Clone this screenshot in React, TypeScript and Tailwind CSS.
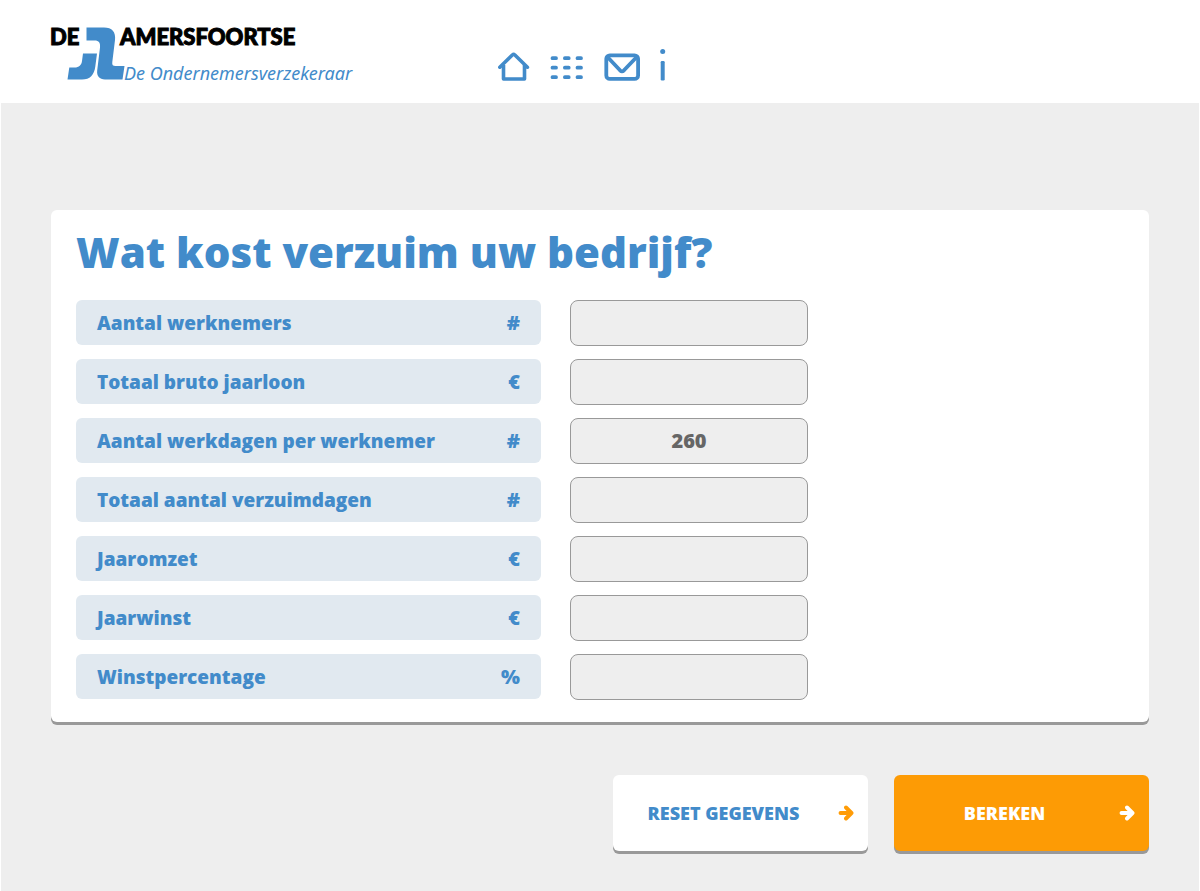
import { useState } from "react";
import type { ReactNode } from "react";

type Field = { id: string; label: string; unit: string; initial: string };

const fields: Field[] = [
  { id: "werknemers", label: "Aantal werknemers", unit: "#", initial: "" },
  { id: "jaarloon", label: "Totaal bruto jaarloon", unit: "€", initial: "" },
  { id: "werkdagen", label: "Aantal werkdagen per werknemer", unit: "#", initial: "260" },
  { id: "verzuimdagen", label: "Totaal aantal verzuimdagen", unit: "#", initial: "" },
  { id: "jaaromzet", label: "Jaaromzet", unit: "€", initial: "" },
  { id: "jaarwinst", label: "Jaarwinst", unit: "€", initial: "" },
  { id: "winstpercentage", label: "Winstpercentage", unit: "%", initial: "" },
];

const initialValues = Object.fromEntries(fields.map((f) => [f.id, f.initial]));

function Logo() {
  return (
    <svg width="310" height="64" viewBox="0 0 310 64" className="block">
      <g fill="#428bca">
        <path d="M36.500 7.500H54C62 7.500 66 12 65 20L62.300 42C61.900 45 63 46 65.500 46H74.500L72.500 59.500H55C49.500 59.500 46.500 56 47.200 50.500L50 27.500C50.500 23 49 20.500 44.500 20.500H36.500Z" />
        <path d="M33 33.500H47L45.300 46.500C44.200 55 40 59.500 32 59.500H17.500L19.300 47.500H24.500C29 47.500 31.500 45 32 41Z" />
      </g>
      <g
        className="font-['Lato',sans-serif] font-black"
        fill="#000"
        stroke="#000"
        strokeWidth="1"
        fontSize="22"
      >
        <text x="0" y="25">DE</text>
        <text x="70" y="25">AMERSFOORTSE</text>
      </g>
      <text x="74" y="60" className="font-['Noto_Sans',sans-serif] italic" fill="#428bca" fontSize="18">
        De Ondernemersverzekeraar
      </text>
    </svg>
  );
}

function NavLink({ label, children }: { label: string; children: ReactNode }) {
  return (
    <a href="#" aria-label={label} className="block text-[#428bca]">
      {children}
    </a>
  );
}

function Nav() {
  return (
    <nav className="flex items-end gap-5">
      <NavLink label="Home">
        <svg width="32" height="34" viewBox="0 0 32 34" fill="none" stroke="currentColor" strokeWidth="3.600" strokeLinecap="round" strokeLinejoin="round">
          <path d="M1.800 18.200L14.300 6Q15.600 4.900 16.900 6L29.400 18.200" />
          <path d="M5.500 16V30H26.500V16" strokeLinecap="butt" />
        </svg>
      </NavLink>
      <NavLink label="Menu">
        <svg width="34" height="34" viewBox="0 0 34 34" stroke="currentColor" strokeWidth="3.800" strokeLinecap="round">
          <path d="M2.500 9.200H6M14.900 9.200H18.700M27.500 9.200H31M2.500 18.700H6M14.900 18.700H18.700M27.500 18.700H31M2.500 28.200H6M14.900 28.200H18.700M27.500 28.200H31" />
        </svg>
      </NavLink>
      <NavLink label="Contact">
        <svg width="36" height="34" viewBox="0 0 36 34" fill="none" stroke="currentColor" strokeWidth="3.800" strokeLinecap="round" strokeLinejoin="round">
          <rect x="2.300" y="6.300" width="31.800" height="23.600" rx="3.500" />
          <path d="M3.500 8L16 21.300Q18 23.300 20 21.300L32.700 8" />
        </svg>
      </NavLink>
      <NavLink label="Informatie">
        <svg width="6" height="34" viewBox="0 0 6 34" fill="currentColor">
          <circle cx="2.700" cy="2.500" r="2.500" />
          <rect x="0.700" y="12" width="4" height="19.500" rx="1.200" />
        </svg>
      </NavLink>
    </nav>
  );
}

function Arrow() {
  return (
    <svg width="16" height="16" viewBox="0 0 16 16" fill="none" stroke="currentColor" strokeWidth="3.900" strokeLinecap="round" strokeLinejoin="round" aria-hidden="true" className="shrink-0">
      <path d="M2.500 8H12.500M8 2.500L13.500 8L8 13.500" />
    </svg>
  );
}

export default function App() {
  const [values, setValues] = useState<Record<string, string>>(initialValues);

  return (
    <div className="flex min-h-screen flex-col bg-white font-['Open_Sans',sans-serif] text-[#428bca]">
      <header className="flex items-start gap-[138px] px-[50px] pt-5 pb-[19px]">
        <a href="#" aria-label="De Amersfoortse, De Ondernemersverzekeraar">
          <Logo />
        </a>
        <div className="pt-[29px]">
          <Nav />
        </div>
      </header>

      <main className="mx-px grow bg-[#eeeeee] px-[50px] pt-[107px] pb-9">
        <form
          onSubmit={(e) => e.preventDefault()}
          onReset={() => setValues(initialValues)}
        >
          <section className="rounded-md bg-white px-[25px] pt-[18px] pb-[22px] shadow-[0_3px_0_#999999]">
            <h1 className="text-[42px] leading-[48px] font-extrabold">Wat kost verzuim uw bedrijf?</h1>
            <div className="mt-6 flex flex-col gap-[13px]">
              {fields.map((f) => (
                <div key={f.id} className="flex items-start gap-[29px]">
                  <label
                    htmlFor={f.id}
                    className="flex h-[45px] w-[465px] items-center justify-between rounded-md bg-[#e1e9f0] px-[21px] text-[19px] leading-[30px] font-extrabold"
                  >
                    <span>{f.label}</span>
                    <span className="text-[20px]">{f.unit}</span>
                  </label>
                  <input
                    id={f.id}
                    type="text"
                    inputMode="decimal"
                    value={values[f.id]}
                    onChange={(e) => setValues({ ...values, [f.id]: e.target.value })}
                    className="h-[46px] w-[238px] rounded-lg border border-[#999999] bg-[#eeeeee] px-3 pb-0.5 text-center text-[20px] font-extrabold text-[#666666]"
                  />
                </div>
              ))}
            </div>
          </section>

          <div className="mt-[53px] flex justify-end gap-[26px]">
            <button
              type="reset"
              className="flex h-[76px] w-[255px] items-center gap-1 rounded-md bg-white pr-[14px] text-[18px] font-extrabold shadow-[0_3px_0_#999999]"
            >
              <span className="grow text-center">RESET GEGEVENS</span>
              <span className="text-[#ff9c07]">
                <Arrow />
              </span>
            </button>
            <button
              type="submit"
              className="flex h-[76px] w-[255px] items-center gap-1 rounded-md bg-[#fd9b05] pr-[14px] text-[18px] font-extrabold text-white shadow-[0_3px_0_#999999]"
            >
              <span className="grow text-center">BEREKEN</span>
              <Arrow />
            </button>
          </div>
        </form>
      </main>
    </div>
  );
}
